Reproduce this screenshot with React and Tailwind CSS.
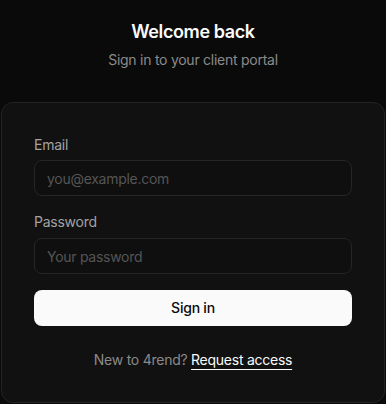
export default function App() {
  return (
    <div
      className="min-h-screen bg-[#0a0a0a] flex flex-col items-center pt-[18px] text-white tracking-[-0.016em]"
      style={{ fontFamily: 'Inter, "Noto Sans", sans-serif' }}
    >
      {/* Heading */}
      <div className="text-center mb-8">
        <h1 className="text-lg leading-7 font-semibold tracking-[-0.022em] text-[#fafafa]">Welcome back</h1>
        <p className="mt-1 text-sm leading-5 text-[#8a8a8a]">Sign in to your client portal</p>
      </div>

      {/* Card */}
      <div className="w-full max-w-sm rounded-xl border border-[#232323] bg-[#111111] px-8 pt-8 pb-8">
        <form className="space-y-4" onSubmit={(e) => e.preventDefault()}>
          <div>
            <label className="block text-sm leading-5 text-[#a3a3a3] mb-[5px]">Email</label>
            <input
              type="email"
              placeholder="you@example.com"
              className="w-full h-9 rounded-lg border border-[#262626] bg-[#0f0f0f] px-3 text-sm tracking-[-0.02em] text-white placeholder:text-[#555555] outline-none"
            />
          </div>
          <div>
            <label className="block text-sm leading-5 text-[#a3a3a3] mb-1.5">Password</label>
            <input
              type="password"
              placeholder="Your password"
              className="w-full h-9 rounded-lg border border-[#262626] bg-[#0f0f0f] px-3 text-sm tracking-[-0.02em] text-white placeholder:text-[#555555] outline-none"
            />
          </div>
          <button
            type="submit"
            className="w-full h-9 rounded-lg bg-[#fafafa] text-sm font-medium tracking-[-0.016em] text-[#0a0a0a]"
          >
            Sign in
          </button>
        </form>

        <p className="mt-6 text-center text-sm leading-5 text-[#8a8a8a]">
          New to 4rend?{' '}
          <a href="#" className="text-[#fafafa] underline underline-offset-4 decoration-[#fafafa]">
            Request access
          </a>
        </p>
      </div>
    </div>
  );
}
